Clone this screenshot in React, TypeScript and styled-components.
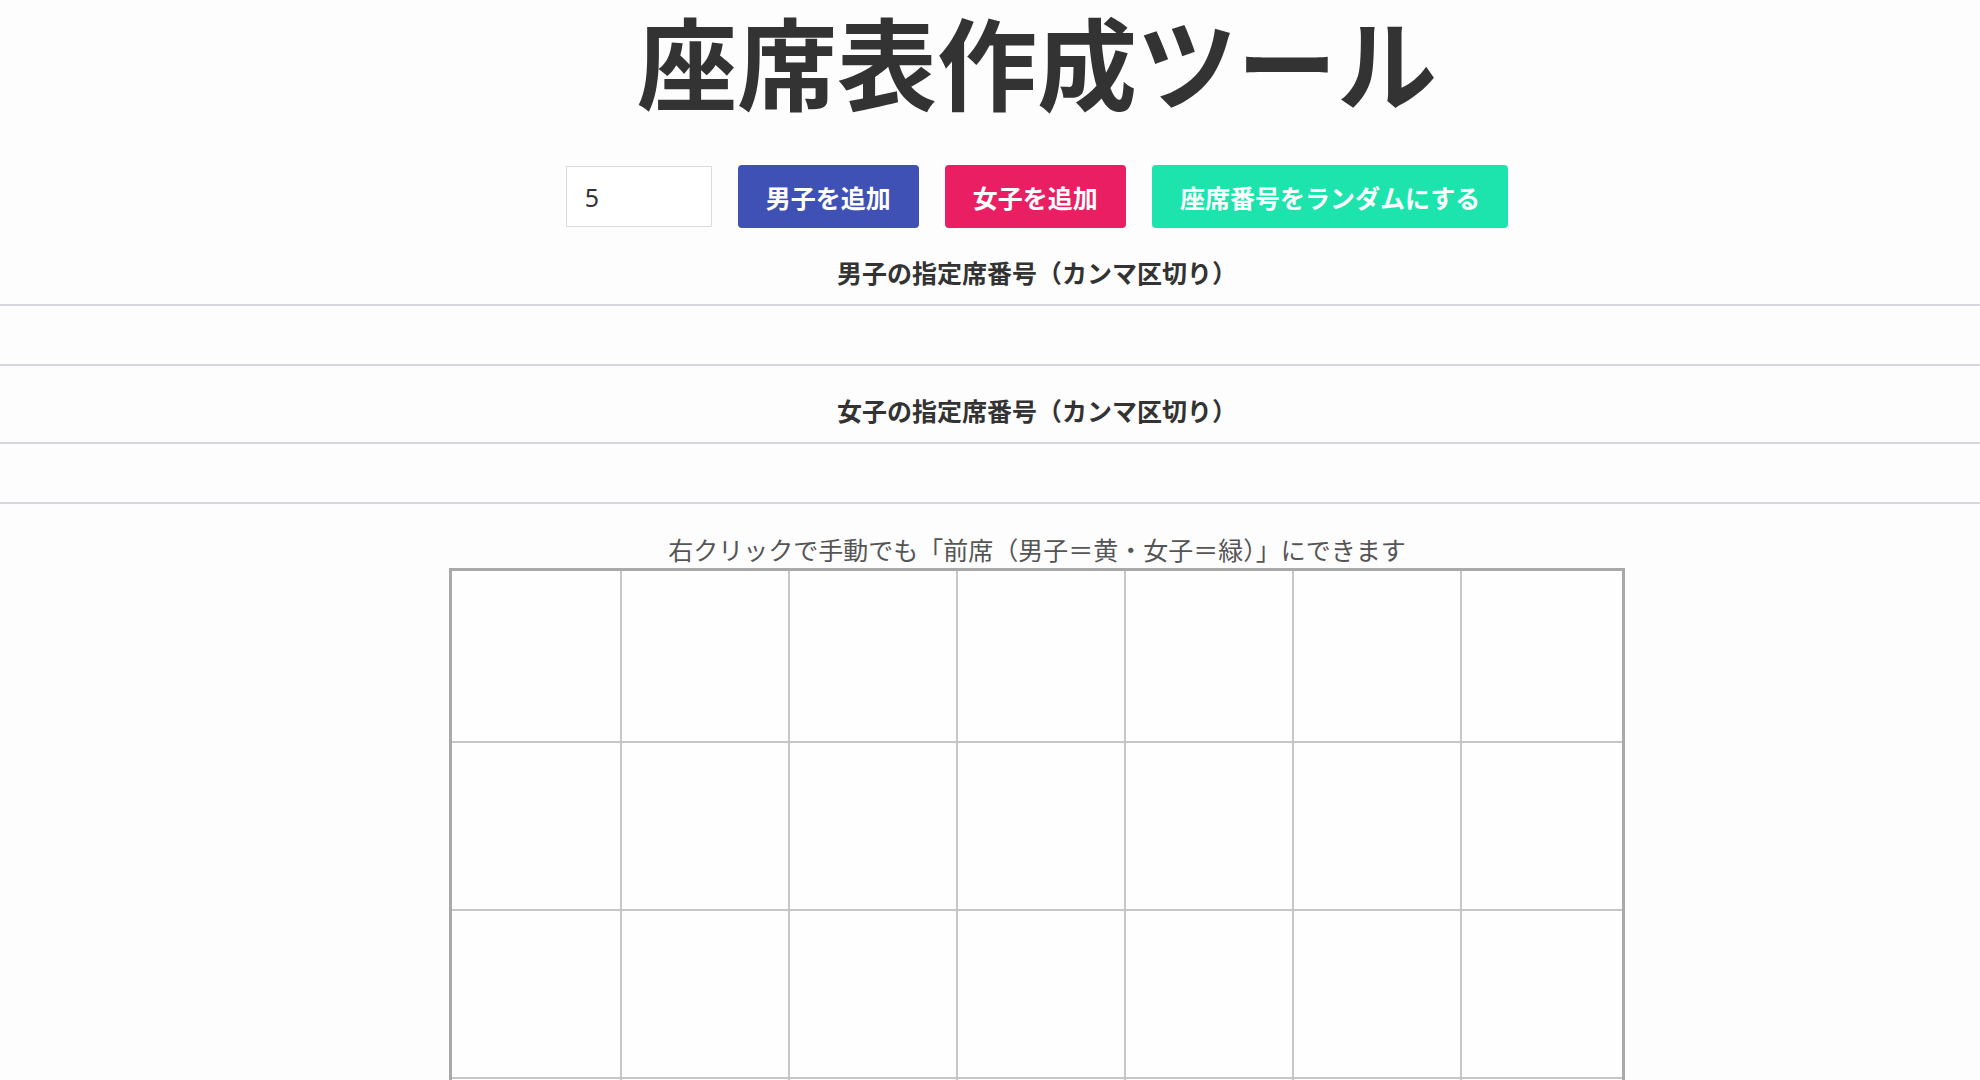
import React from 'react'
import styled, { createGlobalStyle } from 'styled-components'

const GlobalStyle = createGlobalStyle`
  html, body {
    margin: 0;
    padding: 0;
    background: #fdfdfd;
    font-family: "Noto Sans CJK JP", "Noto Sans", sans-serif;
    color: #333;
  }
`

const Page = styled.div`
  display: flex;
  flex-direction: column;
  width: 100%;
`

const Centered = styled.div`
  display: flex;
  flex-direction: column;
  align-items: center;
  padding-left: 94px;
`

const Title = styled.h1`
  margin: 0;
  padding-top: 4px;
  font-size: 100px;
  line-height: 112px;
  font-weight: 700;
  color: #333;
`

const Toolbar = styled.div`
  display: flex;
  align-items: center;
  gap: 26px;
  margin-top: 49px;
`

const CountInput = styled.input`
  box-sizing: border-box;
  width: 146px;
  height: 61px;
  padding: 0 18px;
  border: 1px solid #dcdcdc;
  background: #fff;
  font-family: "Noto Sans", sans-serif;
  font-size: 25px;
  color: #333;
  outline: none;
`

const ActionButton = styled.button<{ $bg: string }>`
  height: 63px;
  padding: 0 28px;
  border: none;
  border-radius: 4px;
  background: ${(p) => p.$bg};
  color: #fff;
  font-family: "Noto Sans CJK JP", sans-serif;
  font-size: 25px;
  font-weight: 700;
  cursor: pointer;
`

const FieldLabel = styled.div`
  margin-top: 26px;
  font-size: 25px;
  line-height: 36px;
  font-weight: 700;
  color: #333;
`

const SeatField = styled.input`
  box-sizing: border-box;
  display: block;
  width: 100%;
  height: 62px;
  margin: 14px 0 0;
  border: none;
  border-top: 2px solid #d6d6dc;
  border-bottom: 2px solid #d6d6dc;
  background: transparent;
  font-size: 25px;
  outline: none;
`

const Hint = styled.div`
  margin-top: 27px;
  font-size: 25px;
  line-height: 36px;
  color: #555;
`

const SeatGrid = styled.div`
  display: grid;
  grid-template-columns: 170px repeat(5, 168px) 160px;
  grid-template-rows: 172px repeat(3, 168px);
  margin-top: 1px;
  border: 3px solid #a9a9a9;
  background: #fefefe;
`

const Seat = styled.div<{ $last: boolean }>`
  border-right: ${(p) => (p.$last ? 'none' : '2px solid #c6c6c6')};
  border-bottom: 2px solid #c6c6c6;
`

const COLS = 7
const ROWS = 4

export default function App() {
  const seats = Array.from({ length: COLS * ROWS }, (_, i) => i)
  return (
    <Page>
      <GlobalStyle />
      <Centered>
        <Title>座席表作成ツール</Title>
        <Toolbar>
          <CountInput type="number" defaultValue={5} />
          <ActionButton $bg="#3f51b5">男子を追加</ActionButton>
          <ActionButton $bg="#e91e63">女子を追加</ActionButton>
          <ActionButton $bg="#1de4ad">座席番号をランダムにする</ActionButton>
        </Toolbar>
        <FieldLabel>男子の指定席番号（カンマ区切り）</FieldLabel>
      </Centered>
      <SeatField type="text" />
      <Centered>
        <FieldLabel>女子の指定席番号（カンマ区切り）</FieldLabel>
      </Centered>
      <SeatField type="text" />
      <Centered>
        <Hint>右クリックで手動でも「前席（男子＝黄・女子＝緑）」にできます</Hint>
        <SeatGrid>
          {seats.map((i) => (
            <Seat key={i} $last={i % COLS === COLS - 1} />
          ))}
        </SeatGrid>
      </Centered>
    </Page>
  )
}
